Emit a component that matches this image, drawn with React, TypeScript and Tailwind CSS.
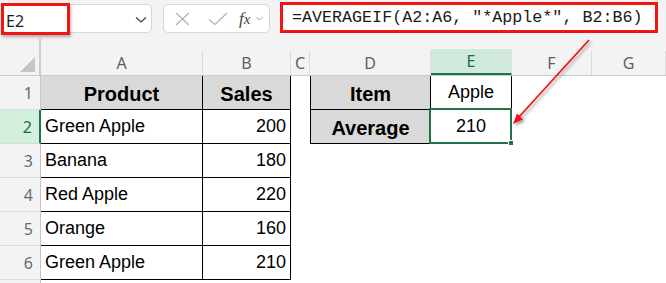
import React from "react";

const cols = [
  { k: "A", w: "w-[162px]" },
  { k: "B", w: "w-[88px]" },
  { k: "C", w: "w-[19px]" },
  { k: "D", w: "w-[121px]" },
  { k: "E", w: "w-[81px]" },
  { k: "F", w: "w-[80px]" },
  { k: "G", w: "w-[74px]" },
];

const data: [string, string][] = [
  ["Green Apple", "200"],
  ["Banana", "180"],
  ["Red Apple", "220"],
  ["Orange", "160"],
  ["Green Apple", "210"],
];

function RowHeader({ n, active }: { n?: number; active?: boolean }) {
  return (
    <div
      className={
        "w-[41px] shrink-0 h-full flex items-center justify-end pr-[7px] text-[16px] font-['Noto_Sans',sans-serif] border-b border-[#dcdcdc] " +
        (active
          ? "bg-[#d3f0df] text-[#1d6b40] border-r-2 border-r-[#217346]"
          : "bg-[#f3f3f3] text-[#6a6a6a] border-r border-r-[#c6c6c6]")
      }
    >
      {n}
    </div>
  );
}

export default function App() {
  return (
    <div className="relative w-[666px] h-[283px] overflow-hidden bg-[#f3f3f3] font-['Liberation_Sans',Arial,sans-serif]">
      {/* Toolbar */}
      <div className="flex items-start h-[39px] pl-[2px] pt-[4px]">
        <div className="relative w-[150px] h-[29px] bg-white border border-[#d6d6d6] rounded-[5px] flex items-center justify-between pl-[3px] pr-[4px] pt-[4px]">
          <span className="text-[16px] text-[#1b1b1b] font-['Noto_Sans',sans-serif] leading-none">E2</span>
          <svg width="12" height="8" viewBox="0 0 12 8" className="mt-[-2px]">
            <path d="M1 1.5 L6 6 L11 1.5" fill="none" stroke="#404040" strokeWidth="1.3" />
          </svg>
          <div className="absolute left-[-2px] top-[-2px] w-[69px] h-[32px] border-[3px] border-[#f01414] shadow-[1px_2px_3px_rgba(0,0,0,0.3)]" />
        </div>
        <div className="ml-[11px] w-[107px] h-[29px] bg-white border border-[#d6d6d6] rounded-[5px] flex items-center pl-[11px]">
          <svg width="16" height="14" viewBox="0 0 16 14">
            <path d="M1 1 L14 13 M14 1 L1 13" stroke="#b3b3b3" strokeWidth="1.3" fill="none" />
          </svg>
          <svg width="20" height="14" viewBox="0 0 20 14" className="ml-[17px]">
            <path d="M1 7.5 L7 12.5 L19 1" stroke="#b3b3b3" strokeWidth="1.3" fill="none" />
          </svg>
          <span className="ml-[11px] text-[#444] font-['Liberation_Serif',serif] italic text-[17px] leading-none">
            f<span className="text-[15px] font-['Liberation_Serif',serif] italic">x</span>
          </span>
          <svg width="7" height="5" viewBox="0 0 7 5" className="ml-[6px]">
            <path d="M0.5 1 L3.5 4 L6.5 1" stroke="#9a9a9a" strokeWidth="1" fill="none" />
          </svg>
        </div>
        <div className="ml-[10px] mt-[-2px] w-[378px] h-[31px] bg-white border-[3px] border-[#f01414] flex items-center pl-[9px] pt-[1px]">
          <span className="font-['Liberation_Mono',monospace] text-[16.7px] text-[#1b1b1b] whitespace-pre leading-none">
            =AVERAGEIF(A2:A6, "*Apple*", B2:B6)
          </span>
        </div>
      </div>

      {/* Column header row */}
      <div className="flex h-[37px] border-b border-[#c9c9c9]">
        <div className="w-[41px] shrink-0 border-r-2 border-[#cdcdcd] flex items-end justify-end pr-[4px] pb-[3px]">
          <svg width="15" height="15" viewBox="0 0 15 15">
            <path d="M15 0 L15 15 L0 15 Z" fill="#c5c5c5" />
          </svg>
        </div>
        {cols.map((c) => (
          <div key={c.k} className={c.w + " shrink-0 flex flex-col"}>
            <div className="h-[13px]" />
            <div
              className={
                "flex-1 flex items-center justify-center text-[16px] font-['Noto_Sans',sans-serif] border-r border-[#dcdcdc] " +
                (c.k === "E"
                  ? "bg-[#cfeadb] text-[#1d6b40] border-b-2 border-b-[#217346]"
                  : "text-[#5f5f5f]")
              }
            >
              {c.k}
            </div>
          </div>
        ))}
      </div>

      {/* Row 1 */}
      <div className="flex h-[34px] bg-white">
        <RowHeader n={1} />
        <div className="w-[162px] shrink-0 bg-[#d9d9d9] border-r border-b border-black flex items-center justify-center font-bold text-[20px] text-black pt-[2px]">
          Product
        </div>
        <div className="w-[88px] shrink-0 bg-[#d9d9d9] border-r border-b border-black flex items-center justify-center font-bold text-[20px] text-black pt-[2px]">
          Sales
        </div>
        <div className="w-[19px] shrink-0" />
        <div className="w-[121px] shrink-0 bg-[#d9d9d9] border-l border-r border-b border-black flex items-center justify-center font-bold text-[20px] text-black pt-[2px]">
          Item
        </div>
        <div className="w-[81px] shrink-0 border-r border-b border-black flex items-center justify-center text-[18px] text-black">
          Apple
        </div>
        <div className="w-[80px] shrink-0" />
        <div className="w-[74px] shrink-0" />
      </div>

      {data.map(([p, s], i) => (
        <div key={i} className="flex h-[34px] bg-white">
          <RowHeader n={i + 2} active={i === 0} />
          <div className="w-[162px] shrink-0 border-r border-b border-black flex items-center pl-[4px] text-[18px] text-black">
            {p}
          </div>
          <div className="w-[88px] shrink-0 border-r border-b border-black flex items-center justify-end pr-[4px] text-[18px] text-black">
            {s}
          </div>
          <div className="w-[19px] shrink-0" />
          {i === 0 ? (
            <>
              <div className="w-[121px] shrink-0 bg-[#d9d9d9] border-l border-r border-b border-black flex items-center justify-center font-bold text-[20px] text-black pt-[2px]">
                Average
              </div>
              <div className="relative w-[81px] shrink-0 border-r border-b border-black flex items-center justify-center text-[18px] text-black">
                210
                <div className="absolute left-[-2px] top-[-2px] right-[-1px] bottom-[-1px] border-2 border-[#217346]" />
                <div className="absolute right-[-3px] bottom-[-3px] w-[6px] h-[6px] bg-[#217346] border border-white" />
              </div>
            </>
          ) : (
            <>
              <div className="w-[121px] shrink-0" />
              <div className="w-[81px] shrink-0" />
            </>
          )}
          <div className="w-[80px] shrink-0" />
          <div className="w-[74px] shrink-0" />
        </div>
      ))}

      <div className="flex h-[34px] bg-white">
        <RowHeader />
        <div className="flex-1" />
      </div>

      {/* Annotation arrow */}
      <svg
        className="absolute left-0 top-0 pointer-events-none"
        width="666"
        height="283"
        viewBox="0 0 666 283"
      >
        <defs>
          <filter id="sh" x="-20%" y="-20%" width="140%" height="140%">
            <feDropShadow dx="2" dy="2" stdDeviation="1.5" floodColor="#000" floodOpacity="0.35" />
          </filter>
        </defs>
        <g filter="url(#sh)">
          <line x1="589" y1="40" x2="518" y2="118" stroke="#f01414" strokeWidth="1.8" />
          <polygon points="513,124 523,119.5 517,113.5" fill="#f01414" />
        </g>
      </svg>
    </div>
  );
}
